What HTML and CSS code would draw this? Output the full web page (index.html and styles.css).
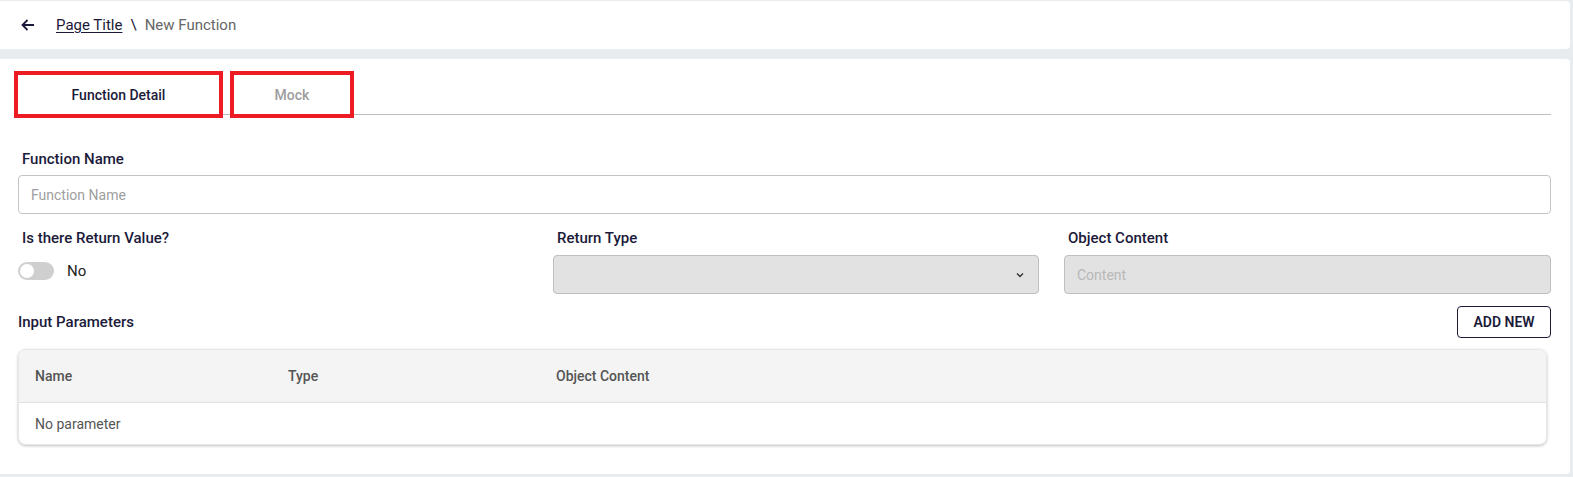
FILE: index.html
```html
<!DOCTYPE html>
<html>
<head>
<meta charset="utf-8">
<link rel="stylesheet" href="styles.css">
</head>
<body>
<div class="page">
  <header class="topbar">
    <svg class="back" width="16" height="16" viewBox="0 0 16 16"><path d="M14 8H2.5M7.5 3L2.5 8l5 5" fill="none" stroke="#1b1a3a" stroke-width="1.8"/></svg>
    <a class="crumb-link">Page Title</a>
    <span class="crumb-sep">\</span>
    <span class="crumb-current">New Function</span>
  </header>
  <main class="card">
    <div class="tabbar">
      <div class="tab active">Function Detail</div>
      <div class="tab">Mock</div>
    </div>
    <div class="form">
      <label class="label">Function Name</label>
      <div class="input"><span class="placeholder">Function Name</span></div>
      <div class="row3">
        <div class="field">
          <label class="label l2">Is there Return Value?</label>
          <div class="switch-row">
            <span class="switch"><span class="knob"></span></span>
            <span class="switch-text">No</span>
          </div>
        </div>
        <div class="field">
          <label class="label l2">Return Type</label>
          <div class="input disabled select">
            <svg width="8" height="6" viewBox="0 0 8 6"><path d="M1 1.5l3 3 3-3" fill="none" stroke="#333" stroke-width="1.4"/></svg>
          </div>
        </div>
        <div class="field">
          <label class="label l2">Object Content</label>
          <div class="input disabled"><span class="placeholder light">Content</span></div>
        </div>
      </div>
      <div class="params-head">
        <span class="params-title">Input Parameters</span>
        <button class="btn-outline">ADD NEW</button>
      </div>
      <div class="table">
        <div class="thead">
          <span>Name</span><span>Type</span><span>Object Content</span>
        </div>
        <div class="trow">No parameter</div>
      </div>
    </div>
  </main>
</div>
</body>
</html>
```
FILE: styles.css
```css
* { box-sizing: border-box; }
html, body { margin: 0; padding: 0; }
body {
  background: #e9ecef;
  font-family: Roboto, "Noto Sans", sans-serif;
  width: 1573px;
  height: 477px;
  overflow: hidden;
}
.page { padding-top: 1px; width: 1570px; }
.topbar {
  background: #fff;
  height: 48px;
  display: flex;
  align-items: center;
  padding-left: 20px;
  border-radius: 0 4px 4px 0;
  font-size: 15px;
}
.back { margin-right: 20px; }
.crumb-link { color: #1b1a3a; text-decoration: underline; text-underline-offset: 2px; }
.crumb-sep { color: #1b1a3a; margin: 0 8px; }
.crumb-current { color: #666; }
.card {
  background: #fff;
  margin-top: 10px;
  height: 415px;
  padding: 16px 19px 0 18px;
  border-radius: 0 4px 4px 0;
}
.tabbar {
  display: flex;
  gap: 15px;
  border-bottom: 1px solid #bdbdbd;
  width: 1533px;
}
.tab {
  height: 39px;
  display: flex;
  align-items: center;
  justify-content: center;
  font-size: 14px;
  font-weight: 500;
  color: #9e9e9e;
  outline: 4px solid #ed1c24;
  width: 116px;
}
.tab.active { width: 201px; color: #1b1a3a; }
.form { padding-top: 36px; }
.label {
  display: block;
  font-size: 15px;
  font-weight: 500;
  line-height: 17px;
  color: #1b1a3a;
  padding-left: 4px;
  margin-bottom: 7px;
}
.label.l2 { margin-bottom: 8px; }
.input {
  height: 39px;
  border: 1px solid #c4c4c4;
  border-radius: 4px;
  display: flex;
  align-items: center;
  padding: 0 12px;
  font-size: 14px;
}
.placeholder { color: #9e9e9e; }
.placeholder.light { color: #b8b8b8; }
.input.disabled { background: #e2e2e2; border-color: #bfbfbf; }
.select { justify-content: flex-end; padding-right: 14px; }
.row3 {
  display: grid;
  grid-template-columns: 510px 486px 487px;
  column-gap: 25px;
  margin-top: 16px;
}
.switch-row { display: flex; align-items: center; height: 32px; margin-top: 0; }
.switch {
  width: 36px; height: 18px; border-radius: 9px; background: #cfcfcf;
  position: relative; display: inline-block;
}
.knob {
  position: absolute; left: 2px; top: 2px; width: 14px; height: 14px;
  border-radius: 50%; background: #fff;
}
.switch-text { margin-left: 13px; font-size: 15px; color: #222; }
.params-head {
  display: flex;
  justify-content: space-between;
  align-items: center;
  margin-top: 12px;
}
.params-title { font-size: 15px; font-weight: 500; color: #1b1a3a; }
.btn-outline {
  width: 94px; height: 32px;
  background: #fff;
  border: 1px solid #1b1a3a;
  border-radius: 4px;
  font-family: Roboto, sans-serif;
  font-size: 14px; font-weight: 600;
  color: #1b1a3a;
}
.table {
  margin-top: 11px;
  width: 1529px;
  border-radius: 8px;
  overflow: hidden;
  box-shadow: 0 1px 3px rgba(0,0,0,0.25);
  border: 1px solid #e6e6e6;
}
.thead {
  background: #f4f4f4;
  height: 53px;
  display: grid;
  grid-template-columns: 253px 268px 1fr;
  align-items: center;
  padding-left: 16px;
  border-bottom: 1px solid #e0e0e0;
  font-size: 14px; font-weight: 500; color: #555;
}
.trow {
  height: 41px;
  display: flex; align-items: center;
  padding-left: 16px;
  font-size: 14px; color: #555;
}
```
